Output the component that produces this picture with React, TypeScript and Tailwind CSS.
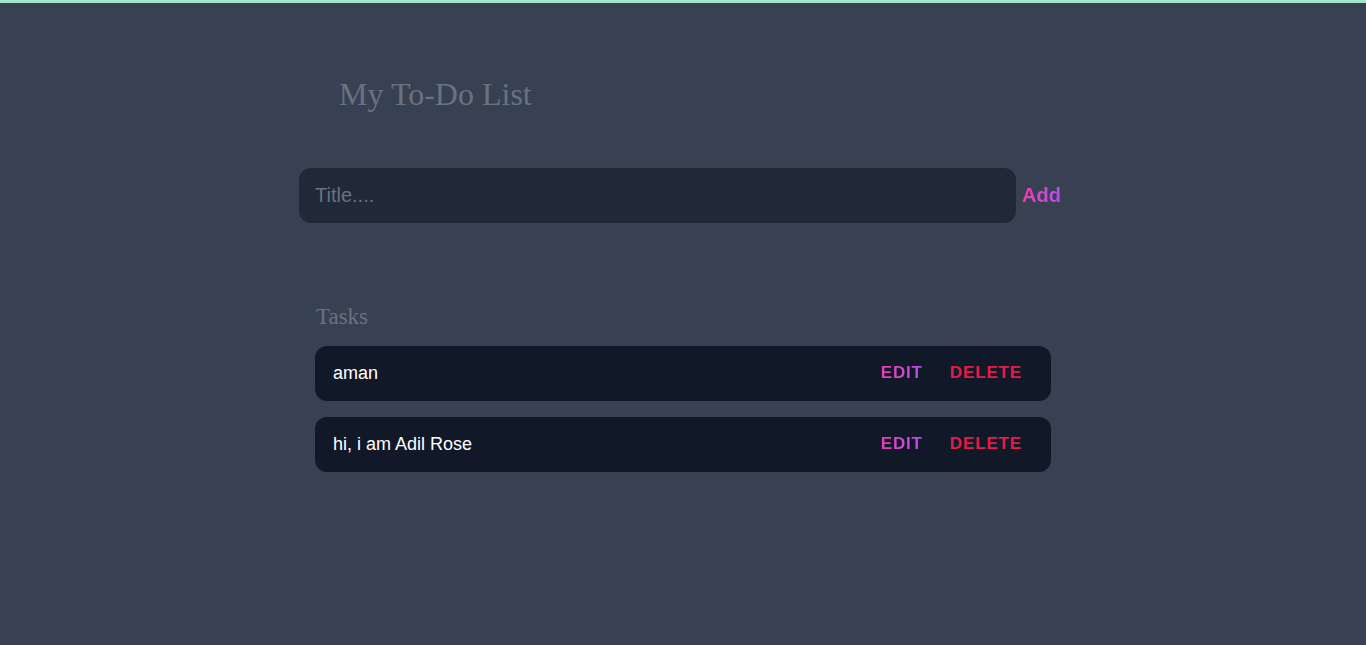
import React from "react";

const tasks = ["aman", "hi, i am Adil Rose"];

export default function App() {
  return (
    <div className="min-h-[645px] bg-[#374151] border-t-[3px] border-[#a7e3c9]">
      <div className="mx-auto max-w-3xl">
        <h1
          className="pt-[73px] px-10 text-[32px] leading-9 text-gray-500"
          style={{ fontFamily: '"Liberation Serif", serif' }}
        >
          My To-Do List
        </h1>
        <div className="mt-[56px] flex items-center">
          <input
            placeholder="Title...."
            className="h-[55px] flex-1 rounded-xl bg-[#1f2937] px-4 text-xl text-white outline-none placeholder:text-gray-500"
            style={{ fontFamily: '"Liberation Sans", sans-serif' }}
          />
          <button
            className="px-1.5 pb-0.5 text-xl font-bold bg-gradient-to-r from-pink-500 to-purple-500 bg-clip-text text-transparent"
            style={{ fontFamily: '"Liberation Sans", sans-serif' }}
          >
            Add
          </button>
        </div>
        <div className="mt-[78px] px-4">
          <h2
            className="text-[23px] leading-8 text-gray-500 pl-px"
            style={{ fontFamily: '"Liberation Serif", serif' }}
          >
            Tasks
          </h2>
          <div className="mt-[13px] flex flex-col gap-4">
            {tasks.map((t) => (
              <div
                key={t}
                className="flex h-[55px] items-center justify-between rounded-xl bg-[#111827] pl-[18px] pr-[17px]"
                style={{ fontFamily: '"Liberation Sans", sans-serif' }}
              >
                <span className="pb-0.5 text-lg text-white">{t}</span>
                <div className="flex items-center gap-[3px] pb-0.5">
                  <button className="px-3 text-[17px] font-bold uppercase tracking-wider bg-gradient-to-r from-pink-500 to-purple-500 bg-clip-text text-transparent">
                    Edit
                  </button>
                  <button className="px-3 text-[17px] font-bold uppercase tracking-wider text-[#e11d48]">
                    Delete
                  </button>
                </div>
              </div>
            ))}
          </div>
        </div>
      </div>
    </div>
  );
}
